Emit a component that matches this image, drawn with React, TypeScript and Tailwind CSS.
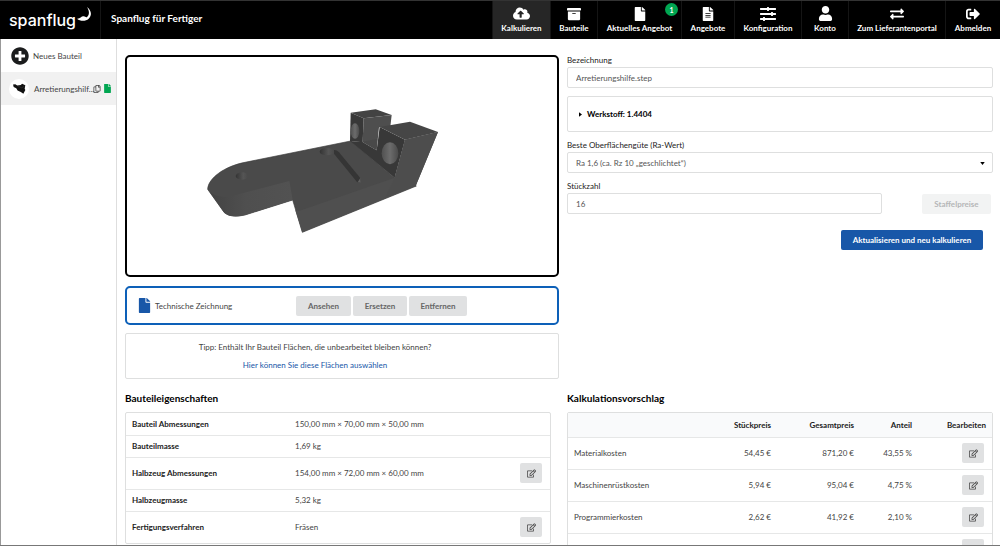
import React from 'react';
import {
  FaArchive,
  FaCloudUploadAlt,
  FaExchangeAlt,
  FaFile,
  FaFileAlt,
  FaPlusCircle,
  FaRegCopy,
  FaRegEdit,
  FaSignOutAlt,
  FaSlidersH,
  FaUser,
} from 'react-icons/fa';

const navItems = [
  { label: 'Kalkulieren', icon: <FaCloudUploadAlt size={17} />, width: 'w-[58px]', active: true },
  { label: 'Bauteile', icon: <FaArchive size={14} />, width: 'w-[47px]' },
  { label: 'Aktuelles Angebot', icon: <FaFile size={14} />, width: 'w-[84px]', badge: 1 },
  { label: 'Angebote', icon: <FaFileAlt size={14} />, width: 'w-[53px]' },
  { label: 'Konfiguration', icon: <FaSlidersH size={16} />, width: 'w-[67px]' },
  { label: 'Konto', icon: <FaUser size={15} />, width: 'w-[47px]' },
  { label: 'Zum Lieferantenportal', icon: <FaExchangeAlt size={14} />, width: 'w-[97px]' },
  { label: 'Abmelden', icon: <FaSignOutAlt size={14} />, width: 'w-[55px]' },
];

const properties = [
  { label: 'Bauteil Abmessungen', value: '150,00 mm × 70,00 mm × 50,00 mm' },
  { label: 'Bauteilmasse', value: '1,69 kg' },
  { label: 'Halbzeug Abmessungen', value: '154,00 mm × 72,00 mm × 60,00 mm', editable: true },
  { label: 'Halbzeugmasse', value: '5,32 kg' },
  { label: 'Fertigungsverfahren', value: 'Fräsen', editable: true },
];

const costs = [
  { label: 'Materialkosten', unit: '54,45 €', total: '871,20 €', share: '43,55 %' },
  { label: 'Maschinenrüstkosten', unit: '5,94 €', total: '95,04 €', share: '4,75 %' },
  { label: 'Programmierkosten', unit: '2,62 €', total: '41,92 €', share: '2,10 %' },
  { label: '', unit: '', total: '', share: '' },
];

const EditButton = ({ label }: { label: string }) => (
  <button
    type="button"
    aria-label={`${label} bearbeiten`}
    className="inline-flex h-5 w-[22px] items-center justify-center rounded-xs bg-[#e0e1e2] align-middle text-[#444]"
  >
    <FaRegEdit size={9} />
  </button>
);

const Header = () => (
  <header className="flex h-[39px] shrink-0 border-t border-[#333] bg-black text-white">
    <a href="#" className="flex w-[101px] items-center border-r border-[#151515] pl-[9px]">
      <span className="font-[Inter,sans-serif] text-[16px] leading-5 font-medium">spanflug</span>
      <svg viewBox="0 0 42 42" className="mb-3 ml-px h-[14px] w-[14px] shrink-0" fill="currentColor">
        <path d="M30 0C43 10 46 25 35 35C26 43 10 43 0 35C10 36 13 27 20 28C26 29 27 33 31 29C38 22 37 11 30 0Z" />
      </svg>
    </a>
    <div className="flex items-center pb-1 pl-[10px] text-[10px] font-bold">Spanflug für Fertiger</div>
    <nav className="ml-auto flex">
      {navItems.map((item) => (
        <a
          key={item.label}
          href="#"
          className={`relative flex flex-col items-center border-l border-[#151515] whitespace-nowrap ${item.width} ${item.active ? 'bg-[#262626]' : ''}`}
        >
          <span className="mt-1 flex h-[17px] items-center">{item.icon}</span>
          <span className="text-[8px] leading-3 font-bold">{item.label}</span>
          {item.badge && (
            <span className="absolute top-[2px] right-[3px] flex h-[13px] w-[13px] items-center justify-center rounded-full bg-[#00a651] text-[7px] font-bold">
              {item.badge}
            </span>
          )}
        </a>
      ))}
    </nav>
  </header>
);

const Sidebar = () => (
  <aside className="w-[117px] shrink-0 border-r border-l border-r-[#dedede] border-l-[#999]">
    <button type="button" className="flex h-[33px] w-full items-center gap-1 pl-[10px]">
      <FaPlusCircle size={18} className="text-[#1b1c1d]" />
      Neues Bauteil
    </button>
    <div className="flex h-[33px] items-center bg-[#f1f1f1] pl-2">
      <span className="mr-[5px] flex h-5 w-5 shrink-0 items-center justify-center rounded-full bg-white">
        <svg viewBox="0 0 40 34" className="h-[11px] w-[13px]">
          <path d="M0 5L7 4L13 8L24 6L28 2L38 7L36 18L38 22L32 33L24 28L14 23L10 16L2 12Z" fill="#111" />
          <path d="M14 9L27 15L36 9" stroke="#555" fill="none" />
        </svg>
      </span>
      <a href="#" className="w-[59px] shrink-0 whitespace-nowrap">Arretierungshilf...</a>
      <button type="button" aria-label="Bauteil kopieren" className="shrink-0">
        <FaRegCopy size={8} />
      </button>
      <FaFile size={9} className="ml-[2px] shrink-0 text-[#00a651]" />
    </div>
  </aside>
);

const PartModel = () => (
  <svg viewBox="-216 -129 1290 654" className="h-full w-full" role="img" aria-label="3D-Modell des Bauteils">
    <defs>
      <linearGradient id="bore" x1="0" x2="1">
        <stop offset="0" stopColor="#505050" />
        <stop offset="0.5" stopColor="#6c6c6c" />
        <stop offset="1" stopColor="#4b4b4b" />
      </linearGradient>
      <linearGradient id="pocket" x1="0" x2="1">
        <stop offset="0" stopColor="#333" />
        <stop offset="0.6" stopColor="#555" />
        <stop offset="1" stopColor="#484848" />
      </linearGradient>
      <linearGradient id="rounding" x1="0" x2="1">
        <stop offset="0" stopColor="#434343" />
        <stop offset="0.45" stopColor="#4f4f4f" />
        <stop offset="1" stopColor="#525252" />
      </linearGradient>
    </defs>
    {/* base body */}
    <path
      d="M26 268C27 235 76 199 138 187L455 123L587 233L652 258L310 397L281 300L138 345Q96 355 76 338Z"
      fill="#4a4a4a"
      stroke="#3c3c3c"
      strokeWidth="2"
    />
    {/* side faces */}
    <path d="M26 268Q42 292 86 291L271 243L281 300L138 345Q96 355 76 338Z" fill="url(#rounding)" />
    <path d="M300 333L587 233L618 119L717 96L650 258L310 397L289 331Z" fill="#4f4f4f" />
    {/* rear lug */}
    <path d="M455 38L530 28L578 45L494 55Z" fill="#434343" />
    <path d="M494 55L578 45L574 80L540 82L533 150L491 125Z" fill="#4e4e4e" />
    <path d="M455 38L494 55L491 127L453 123Z" fill="#383838" />
    <path d="M490 125L535 117L532 150Z" fill="#494949" />
    {/* front lug */}
    <path d="M453 123L491 126L533 151L542 81L618 119L587 233Z" fill="#383838" />
    <path d="M542 81L633 65L717 96L618 119Z" fill="#464646" />
    <path d="M618 119L717 96L650 258L560 290L587 233Z" fill="#4d4d4d" />
    <ellipse cx="468" cy="93" rx="13" ry="23" fill="url(#bore)" />
    <ellipse cx="573" cy="160" rx="25" ry="33" fill="url(#bore)" />
    {/* slot and holes */}
    <ellipse cx="384" cy="155" rx="22" ry="11" fill="url(#pocket)" />
    <path d="M405 150Q412 149 420 157L482 232Q487 240 484 249L474 246L405 161Z" fill="#353535" />
    <path d="M476 247L484 234L485 248Z" fill="#606060" />
    <ellipse cx="129" cy="228" rx="19" ry="11" fill="url(#pocket)" />
  </svg>
);

const greyButton = 'h-5 rounded-xs bg-[#e0e1e2] font-bold text-[#666]';
const field = 'h-[21px] w-full rounded-xs border border-[#dedfdf] bg-white px-2 text-[#555]';

const PartPanel = () => (
  <section>
    <div className="h-[222px] rounded-[5px] border-2 border-black">
      <PartModel />
    </div>
    <div className="mt-[9px] flex h-[39px] items-center rounded-[5px] border-2 border-[#0d60b8] pl-[10px]">
      <FaFile size={15} className="text-[#1857a8]" />
      <span className="ml-[3px] w-[141px]">Technische Zeichnung</span>
      <div className="flex gap-[2px]">
        <button type="button" className={`${greyButton} w-[55px]`}>Ansehen</button>
        <button type="button" className={`${greyButton} w-[54px]`}>Ersetzen</button>
        <button type="button" className={`${greyButton} w-[58px]`}>Entfernen</button>
      </div>
    </div>
    <div className="mt-2 flex h-[46px] flex-col items-center justify-center gap-2 rounded-xs border border-[#dedfdf] pr-[54px]">
      <p>Tipp: Enthält Ihr Bauteil Flächen, die unbearbeitet bleiben können?</p>
      <a href="#" className="text-[#1857a8]">Hier können Sie diese Flächen auswählen</a>
    </div>
  </section>
);

const ConfigForm = () => (
  <form className="pl-2" onSubmit={(e) => e.preventDefault()}>
    <label htmlFor="name" className="block h-3 text-[#222]">Bezeichnung</label>
    <input id="name" defaultValue="Arretierungshilfe.step" className={field} />
    <details className="mt-2 rounded-xs border border-[#dedfdf] text-black">
      <summary className="flex h-[34px] items-center gap-[5px] pl-[11px] font-bold">
        <svg viewBox="0 0 4 6" className="h-[5px] w-[3px]">
          <path d="M0 0L4 3L0 6Z" />
        </svg>
        Werkstoff: 1.4404
      </summary>
    </details>
    <label htmlFor="surface" className="mt-2 block h-3 text-[#222]">Beste Oberflächengüte (Ra-Wert)</label>
    <div className="relative">
      <select id="surface" className={`${field} appearance-none`}>
        <option>Ra 1,6 (ca. Rz 10 „geschlichtet“)</option>
      </select>
      <svg viewBox="0 0 6 4" className="pointer-events-none absolute top-[10px] right-2 h-[3px] w-[5px]">
        <path d="M0 0H6L3 4Z" />
      </svg>
    </div>
    <label htmlFor="quantity" className="mt-2 block h-3 text-[#222]">Stückzahl</label>
    <div className="flex items-end">
      <div className="flex-1">
        <input id="quantity" defaultValue="16" className={field} />
      </div>
      <button type="button" disabled className="mr-[2px] ml-[40px] h-5 w-[69px] rounded-xs bg-[#f2f3f3] font-bold text-[#b5b6b7]">
        Staffelpreise
      </button>
    </div>
    <div className="mt-4 flex justify-end pr-[10px]">
      <button type="submit" className="h-5 w-[142px] rounded-xs bg-[#1857a8] font-bold text-white">
        Aktualisieren und neu kalkulieren
      </button>
    </div>
  </form>
);

const PropertiesTable = () => (
  <section className="pr-2">
    <h2 className="mb-[6px] text-[10px] leading-4 font-bold text-black">Bauteileigenschaften</h2>
    <div className="rounded-xs border border-[#dedfdf]">
      <table className="w-full">
        <tbody>
          {properties.map((row) => (
            <tr key={row.label} className={`border-b border-[#e6e7e7] last:border-b-0 ${row.editable ? 'h-8' : 'h-[22px]'}`}>
              <th scope="row" className="w-[163px] pl-[6px] text-left font-bold text-[#222]">{row.label}</th>
              <td className="pl-[6px]">{row.value}</td>
              <td className="w-[40px] pr-2 text-right leading-none">{row.editable && <EditButton label={row.label} />}</td>
            </tr>
          ))}
        </tbody>
      </table>
    </div>
  </section>
);

const CostTable = () => (
  <section className="pl-2">
    <h2 className="mb-[6px] text-[10px] leading-4 font-bold text-black">Kalkulationsvorschlag</h2>
    <div className="rounded-xs border border-[#dedfdf]">
      <table className="w-full">
        <thead>
          <tr className="h-6 border-b border-[#e6e7e7] bg-[#f9fafb] text-right text-[#222]">
            <th aria-label="Kostenart" />
            <th scope="col" className="w-[80px] font-bold">Stückpreis</th>
            <th scope="col" className="w-[83px] font-bold">Gesamtpreis</th>
            <th scope="col" className="w-[58px] font-bold">Anteil</th>
            <th scope="col" className="w-[80px] pr-[6px] font-bold">Bearbeiten</th>
          </tr>
        </thead>
        <tbody>
          {costs.map((row) => (
            <tr key={row.label} className="h-8 border-b border-[#e6e7e7] text-right">
              <td className="pl-[6px] text-left">{row.label}</td>
              <td>{row.unit}</td>
              <td>{row.total}</td>
              <td>{row.share}</td>
              <td className="pr-2 leading-none">
                <EditButton label={row.label || 'Position'} />
              </td>
            </tr>
          ))}
        </tbody>
      </table>
    </div>
  </section>
);

const App = () => {
  return (
    <div className="flex h-screen flex-col overflow-hidden border-b border-[#777] bg-white font-[Lato,sans-serif] text-[8px] leading-[10px] text-[#444]">
      <Header />
      <div className="flex min-h-0 flex-1">
        <Sidebar />
        <main className="min-w-0 flex-1 overflow-hidden pt-4 pr-[7px] pl-2">
          <div className="grid grid-cols-2">
            <PartPanel />
            <ConfigForm />
          </div>
          <div className="mt-[11px] grid grid-cols-2">
            <PropertiesTable />
            <CostTable />
          </div>
        </main>
      </div>
    </div>
  );
};

export default App;
